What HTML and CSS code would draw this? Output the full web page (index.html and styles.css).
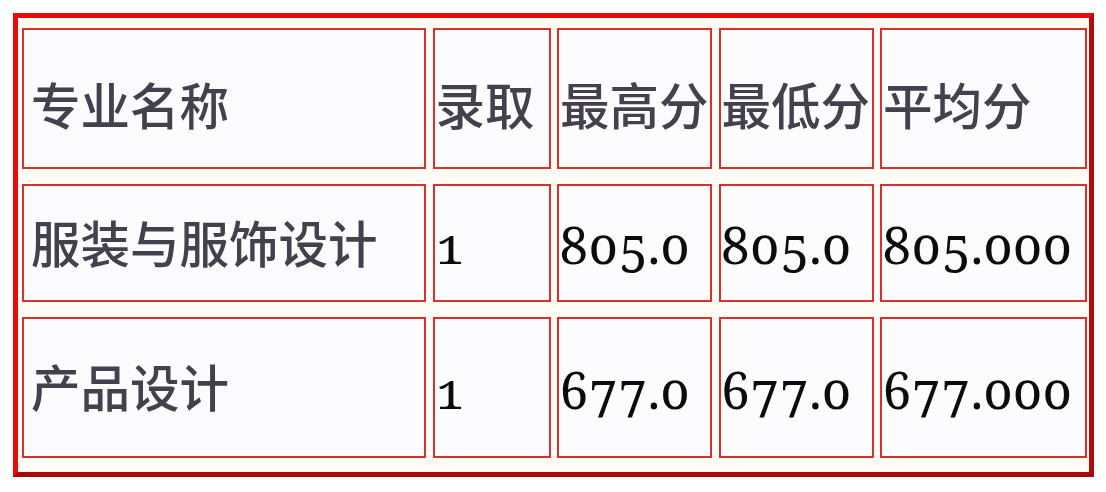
FILE: index.html
```html
<!DOCTYPE html>
<html lang="zh-CN">
<head>
<meta charset="utf-8">
<title>专业录取分数</title>
<link rel="stylesheet" href="styles.css">
</head>
<body>
<div class="frame">
  <div class="table">
    <div class="cell head first">专业名称</div>
    <div class="cell head">录取</div>
    <div class="cell head">最高分</div>
    <div class="cell head">最低分</div>
    <div class="cell head">平均分</div>

    <div class="cell first">服装与服饰设计</div>
    <div class="cell num">1</div>
    <div class="cell num">805.0</div>
    <div class="cell num">805.0</div>
    <div class="cell num">805.000</div>

    <div class="cell first">产品设计</div>
    <div class="cell num">1</div>
    <div class="cell num">677.0</div>
    <div class="cell num">677.0</div>
    <div class="cell num">677.000</div>
  </div>
</div>
</body>
</html>
```
FILE: styles.css
```css
html, body {
  margin: 0;
  padding: 0;
  background: #ffffff;
}

body {
  padding: 13px 0 0 13px;
}

.frame {
  width: fit-content;
  border: 5px solid;
  border-color: #ec0a0a #b00c0c #a80a0a #ec0a0a;
  background: #fffcf5;
  padding: 10px 2px 14px 4px;
}

.table {
  display: grid;
  grid-template-columns: 404px 118px 155px 155px 207px;
  grid-template-rows: 141px 118px 141px;
  column-gap: 6.5px;
  row-gap: 15px;
}

.cell {
  box-sizing: border-box;
  border: 2px solid #d8302a;
  background: #fcfcfe;
  display: flex;
  align-items: center;
  padding-left: 1px;
  padding-bottom: 4px;
  white-space: nowrap;
  overflow: hidden;
  font-family: "Noto Sans CJK SC", sans-serif;
  font-size: 49.5px;
  font-weight: 500;
  color: #44414c;
}

.head {
  padding-top: 10px;
  padding-bottom: 0;
}

.first {
  padding-left: 7px;
}

.num {
  font-family: "Noto Serif", "DejaVu Serif", serif;
  font-variant-numeric: oldstyle-nums;
  font-weight: 400;
  font-size: 51px;
  color: #0c0c0c;
  padding-left: 0;
  padding-top: 2px;
  padding-bottom: 0;
}
```
